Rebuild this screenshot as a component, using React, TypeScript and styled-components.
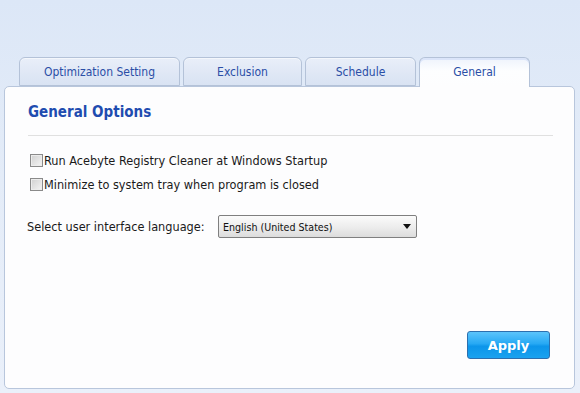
import React, { useState } from 'react';
import styled, { createGlobalStyle } from 'styled-components';

const GlobalStyle = createGlobalStyle`
  html, body {
    margin: 0;
    padding: 0;
  }
  body {
    background: #e6eef9;
    font-family: 'DejaVu Sans Condensed', 'DejaVu Sans', sans-serif;
  }
`;

const tabs = ['Optimization Setting', 'Exclusion', 'Schedule', 'General'];
const tabWidths = [161, 119, 111, 111];

const App = () => {
  const [active, setActive] = useState(3);
  const [startup, setStartup] = useState(false);
  const [tray, setTray] = useState(false);

  return (
    <Window>
      <GlobalStyle />
      <TabRow>
        {tabs.map((t, i) => (
          <Tab
            key={t}
            $active={i === active}
            style={{ width: tabWidths[i] }}
            onClick={() => setActive(i)}
          >
            {t}
          </Tab>
        ))}
      </TabRow>
      <Panel>
        <Heading>General Options</Heading>
        <Divider />
        <CheckRow>
          <CheckBox $checked={startup} onClick={() => setStartup(!startup)} />
          <span>Run Acebyte Registry Cleaner at Windows Startup</span>
        </CheckRow>
        <CheckRow>
          <CheckBox $checked={tray} onClick={() => setTray(!tray)} />
          <span>Minimize to system tray when program is closed</span>
        </CheckRow>
        <LangRow>
          <Label>Select user interface language:</Label>
          <Select>
            <span>English (United States)</span>
            <Arrow />
          </Select>
        </LangRow>
        <Footer>
          <ApplyButton>Apply</ApplyButton>
        </Footer>
      </Panel>
    </Window>
  );
};

export default App;

const Window = styled.div`
  width: 580px;
  height: 393px;
  background: linear-gradient(180deg, #dce7f7 0%, #e4ecf8 45%, #eaf0fa 100%);
  display: flex;
  flex-direction: column;
  overflow: hidden;
`;

const TabRow = styled.div`
  display: flex;
  align-items: flex-end;
  gap: 3px;
  padding: 57px 0 0 19px;
  height: 29px;
  position: relative;
  z-index: 1;
`;

const Tab = styled.div<{ $active: boolean }>`
  box-sizing: border-box;
  height: ${(p) => (p.$active ? '30px' : '29px')};
  margin-bottom: ${(p) => (p.$active ? '-1px' : '0')};
  border: 1px solid #b4c2d8;
  border-bottom: ${(p) => (p.$active ? 'none' : '1px solid #b4c2d8')};
  border-radius: 6px 6px 0 0;
  background: ${(p) =>
    p.$active
      ? 'linear-gradient(180deg, #eef3fc 0%, #fdfeff 45%, #fdfdfe 100%)'
      : 'linear-gradient(180deg, #e9eff9 0%, #dfe7f5 60%, #d9e3f3 100%)'};
  box-shadow: ${(p) => (p.$active ? 'inset 0 2px 0 #dbe5fa' : 'inset 0 1px 0 #f4f7fc')};
  color: #2a4ea6;
  font-size: 12px;
  display: flex;
  align-items: center;
  justify-content: center;
  padding-bottom: ${(p) => (p.$active ? '1px' : '0')};
  cursor: default;
`;

const Panel = styled.div`
  box-sizing: border-box;
  margin: 0 5px 0 4px;
  height: 303px;
  background: #fdfdfe;
  border: 1px solid #b8c6dc;
  border-radius: 5px;
  padding: 16px 23px 29px 23px;
  display: flex;
  flex-direction: column;
`;

const Heading = styled.div`
  font-family: 'DejaVu Sans Condensed', 'DejaVu Sans', sans-serif;
  font-weight: bold;
  font-size: 15px;
  color: #1f4cb0;
  line-height: 19px;
`;

const Divider = styled.div`
  height: 1px;
  background: #e0e0e0;
  margin: 13px 0 0 0;
  width: 525px;
`;

const CheckRow = styled.label`
  display: flex;
  align-items: center;
  gap: 1px;
  height: 24px;
  font-size: 12.6px;
  color: #1a1a1a;
  padding-left: 2px;
  &:first-of-type {
    margin-top: 12px;
  }
`;

const CheckBox = styled.span<{ $checked: boolean }>`
  box-sizing: border-box;
  width: 13px;
  height: 13px;
  border: 1px solid #8a8a8a;
  background: linear-gradient(135deg, #d0d0d0 0%, #e6e6e6 60%, #f4f4f4 100%);
  box-shadow: inset 0 0 0 1px #ececec;
  position: relative;
  &::after {
    content: ${(p) => (p.$checked ? "'✓'" : 'none')};
    position: absolute;
    left: 1px;
    top: -2px;
    font-size: 11px;
    color: #222;
  }
`;

const LangRow = styled.div`
  display: flex;
  align-items: center;
  margin-top: 19px;
`;

const Label = styled.span`
  font-size: 12.6px;
  color: #1a1a1a;
  width: 191px;
  margin-left: -1px;
`;

const Select = styled.div`
  box-sizing: border-box;
  width: 199px;
  height: 23px;
  border: 1px solid #7f7f7f;
  border-radius: 2px;
  background: linear-gradient(180deg, #fbfbfb 0%, #ececec 55%, #dcdcdc 100%);
  display: flex;
  align-items: center;
  justify-content: space-between;
  padding: 0 5px 0 4px;
  font-family: 'DejaVu Sans Condensed', sans-serif;
  font-size: 10.6px;
  color: #111;
`;

const Arrow = styled.span`
  width: 0;
  height: 0;
  border-left: 4px solid transparent;
  border-right: 4px solid transparent;
  border-top: 5px solid #111;
`;

const Footer = styled.div`
  margin-top: auto;
  display: flex;
  justify-content: flex-end;
  padding-right: 1px;
`;

const ApplyButton = styled.button`
  box-sizing: border-box;
  width: 83px;
  height: 28px;
  border: 1px solid #2d6fae;
  border-radius: 3px;
  background: linear-gradient(180deg, #5cc4fb 0%, #27a9f4 45%, #0c95ea 55%, #1aa2ef 100%);
  color: #fff;
  font-family: 'DejaVu Sans', sans-serif;
  font-weight: bold;
  font-size: 13px;
  cursor: pointer;
  padding: 0;
`;
